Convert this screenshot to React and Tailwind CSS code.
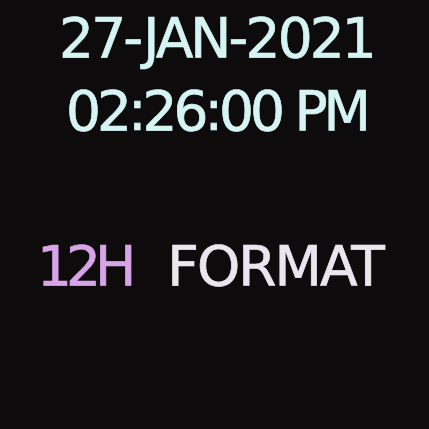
export default function App() {
  return (
    <div className="w-[429px] h-[429px] bg-[#0d0b0c] overflow-hidden flex flex-col [-webkit-text-stroke:0.7px_currentColor]" style={{ fontFamily: '"DejaVu Sans", sans-serif' }}>
      <div className="pt-[2px] pl-[4px] flex flex-col items-center text-[#d6f4f3] text-[55px] leading-[73px]">
        <div className="tracking-[-2.9px]">27-JAN-2021</div>
        <div className="tracking-[-4px]">02:26:00 PM</div>
      </div>
      <div className="mt-[82px] pl-[37px] flex gap-[37px] text-[55px] leading-[73px]">
        <span className="text-[#d8a4e8] tracking-[-6px]">12H</span>
        <span className="text-[#ebe5ef] tracking-[-2px]">FORMAT</span>
      </div>
    </div>
  );
}
